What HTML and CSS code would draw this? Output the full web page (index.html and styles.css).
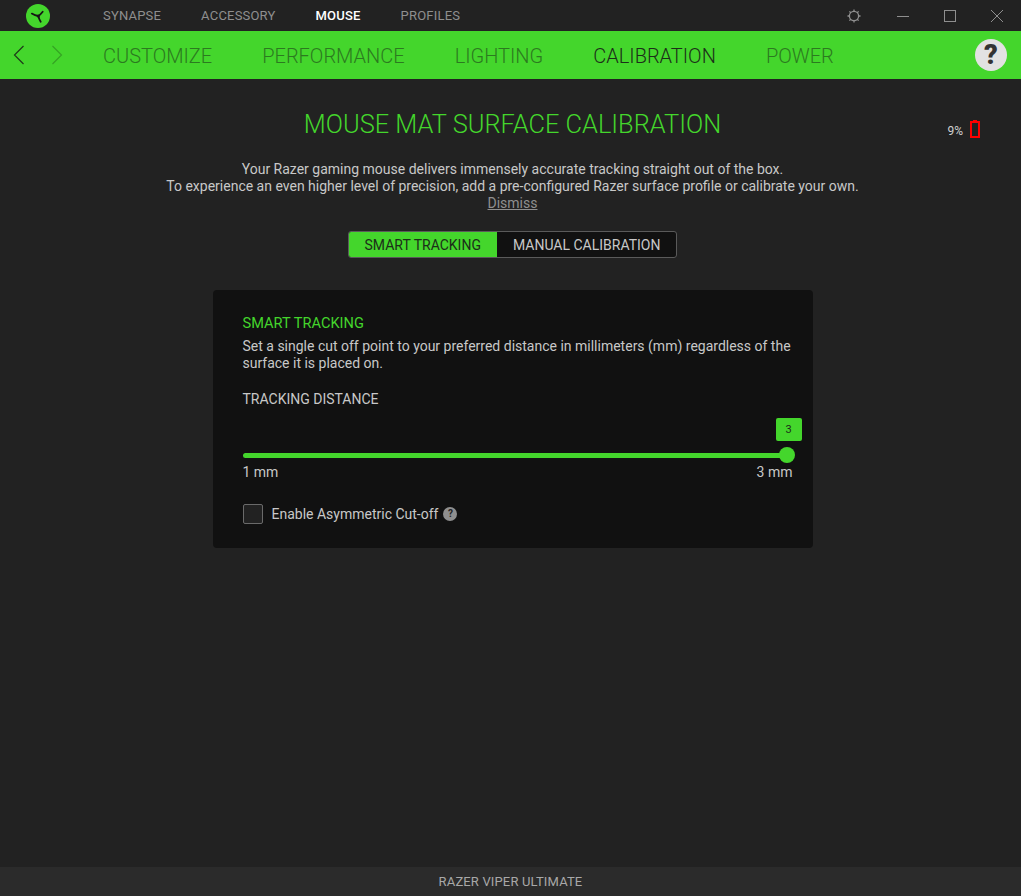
FILE: index.html
```html
<!DOCTYPE html>
<html lang="en">
<head>
<meta charset="utf-8">
<title>Razer Synapse</title>
<link rel="stylesheet" href="styles.css">
</head>
<body>
<div class="app">
  <header class="topbar">
    <div class="logo-cell">
      <svg class="logo" width="24" height="24" viewBox="0 0 24 24">
        <circle cx="12" cy="12" r="12" fill="#44d62c"/>
        <path d="M12.3 12 Q9 11.5 5.8 9.6 M12.3 12 Q14.5 10.5 16.7 7.7 M12.3 12 Q13 15 14.7 17.7" stroke="#161616" stroke-width="1.8" fill="none" stroke-linecap="round"/>
        <circle cx="12.3" cy="12" r="1.6" fill="#161616"/>
      </svg>
    </div>
    <nav class="topnav">
      <a class="topnav-item">SYNAPSE</a>
      <a class="topnav-item">ACCESSORY</a>
      <a class="topnav-item active">MOUSE</a>
      <a class="topnav-item">PROFILES</a>
    </nav>
    <div class="winctl">
      <svg class="winicon gear" width="16" height="16" viewBox="0 0 16 16" fill="none" stroke="#8f8f8f" stroke-width="1.3">
        <circle cx="8" cy="8" r="4.6"/>
        <path d="M8 1.5v2M8 12.5v2M1.5 8h2M12.5 8h2M3.4 3.4l1.4 1.4M11.2 11.2l1.4 1.4M3.4 12.6l1.4-1.4M11.2 4.8l1.4-1.4"/>
      </svg>
      <svg class="winicon" width="14" height="14" viewBox="0 0 14 14" fill="none" stroke="#8f8f8f" stroke-width="1"><path d="M1 7.5h12"/></svg>
      <svg class="winicon" width="14" height="14" viewBox="0 0 14 14" fill="none" stroke="#8f8f8f" stroke-width="1"><rect x="1.5" y="1.5" width="11" height="11"/></svg>
      <svg class="winicon" width="14" height="14" viewBox="0 0 14 14" fill="none" stroke="#8f8f8f" stroke-width="1"><path d="M1 1l12 12M13 1L1 13"/></svg>
    </div>
  </header>
  <div class="greenbar">
    <div class="arrows">
      <svg width="12" height="20" viewBox="0 0 12 20" fill="none" stroke="#1f3a1a" stroke-width="1.2"><path d="M10.5 1 L1.5 10 L10.5 19"/></svg>
      <svg width="12" height="20" viewBox="0 0 12 20" fill="none" stroke="#35a324" stroke-width="1.2"><path d="M1.5 1 L10.5 10 L1.5 19"/></svg>
    </div>
    <nav class="tabs">
      <a class="tab">CUSTOMIZE</a>
      <a class="tab">PERFORMANCE</a>
      <a class="tab">LIGHTING</a>
      <a class="tab current">CALIBRATION</a>
      <a class="tab">POWER</a>
    </nav>
    <div class="help">?</div>
  </div>
  <main class="content">
    <div class="battery">
      <span class="battery-text">9%</span>
      <svg width="10" height="18" viewBox="0 0 10 18" fill="none"><path d="M3 0h4v2H3z" fill="#ff0000"/><rect x="1" y="2" width="8" height="15" stroke="#ff0000" stroke-width="2"/></svg>
    </div>
    <h1 class="title">MOUSE MAT SURFACE CALIBRATION</h1>
    <p class="intro">Your Razer gaming mouse delivers immensely accurate tracking straight out of the box.<br>To experience an even higher level of precision, add a pre-configured Razer surface profile or calibrate your own.<br><a class="dismiss">Dismiss</a></p>
    <div class="segment">
      <span class="seg on">SMART TRACKING</span>
      <span class="seg">MANUAL CALIBRATION</span>
    </div>
    <section class="card">
      <h2 class="card-title">SMART TRACKING</h2>
      <p class="card-desc">Set a single cut off point to your preferred distance in millimeters (mm) regardless of the surface it is placed on.</p>
      <div class="label">TRACKING DISTANCE</div>
      <div class="slider">
        <div class="slider-value"><span class="bubble">3</span></div>
        <div class="track"><span class="thumb"></span></div>
        <div class="ends"><span>1 mm</span><span>3 mm</span></div>
      </div>
      <div class="check-row">
        <span class="checkbox"></span>
        <span class="check-label">Enable Asymmetric Cut-off</span>
        <span class="hint">?</span>
      </div>
    </section>
  </main>
  <footer class="footer">RAZER VIPER ULTIMATE</footer>
</div>
</body>
</html>
```
FILE: styles.css
```css
* { box-sizing: border-box; }
html, body { margin: 0; height: 100%; }
body { background: #222222; font-family: Roboto, "Liberation Sans", sans-serif; color: #c8c8c8; overflow: hidden; }
.app { height: 896px; display: flex; flex-direction: column; }

.topbar { height: 31px; background: #222222; display: flex; align-items: center; }
.logo-cell { width: 103px; padding-left: 26px; display: flex; align-items: center; }
.logo { display: block; }
.topnav { display: flex; gap: 40px; font-size: 13px; }
.topnav-item { color: #8f8f8f; letter-spacing: 0.2px; }
.topnav-item.active { color: #ffffff; font-weight: 500; }
.winctl { margin-left: auto; display: flex; align-items: center; gap: 33px; padding-right: 17px; }
.winicon { display: block; }
.winicon.gear { margin-right: 1px; }

.greenbar { height: 48px; background: #44d62c; display: flex; align-items: center; }
.arrows { width: 103px; padding-left: 13px; display: flex; gap: 26px; align-items: center; }
.arrows svg { display: block; }
.tabs { display: flex; gap: 50px; padding-top: 2px; font-size: 20px; font-weight: 300; color: #2c7a20; }
.tab.current { color: #1c2e19; }
.help { margin-left: auto; margin-right: 14px; width: 32px; height: 32px; border-radius: 50%; background: #e2e2e2; color: #333333; font-size: 27px; font-weight: 900; line-height: 32px; text-align: center; }

.content { flex: 1; position: relative; display: flex; flex-direction: column; align-items: center; padding-left: 4px; }
.battery { position: absolute; top: 41px; right: 41px; display: flex; align-items: flex-start; gap: 7px; }
.battery-text { margin-top: 4px; font-size: 12px; line-height: 14px; color: #d0d0d0; }
.battery svg { display: block; }
.title { margin: 28px 0 0; font-size: 25.4px; line-height: 34px; font-weight: 300; color: #44d62c; }
.intro { margin: 20px 0 0; font-size: 14px; line-height: 17px; text-align: center; color: #c8c8c8; }
.dismiss { color: #8f8f8f; text-decoration: underline; }

.segment { margin-top: 19px; height: 27px; display: flex; border: 1px solid #5a5a5a; border-radius: 3px; background: #111111; overflow: hidden; font-size: 14px; }
.seg { padding: 0 16px; display: flex; align-items: center; color: #c8c8c8; }
.seg.on { background: #44d62c; color: #1c2e19; }

.card { margin-top: 32px; width: 600px; height: 258px; background: #111111; border-radius: 4px; padding: 24px 20px 0 30px; }
.card-title { margin: 0; font-size: 14.6px; line-height: 18px; font-weight: 400; color: #44d62c; }
.card-desc { margin: 6px 0 0; font-size: 14px; line-height: 17px; color: #c8c8c8; }
.label { margin-top: 19px; font-size: 14px; line-height: 17px; color: #c8c8c8; }

.slider { margin-top: 10px; }
.slider-value { display: flex; justify-content: flex-end; margin-right: -9px; }
.bubble { width: 26px; height: 23px; background: #44d62c; border-radius: 2px; color: #1c2e19; font-size: 11px; display: flex; align-items: center; justify-content: center; }
.track { position: relative; margin-top: 12px; height: 5px; background: #44d62c; border-radius: 3px; margin-right: 6px; }
.thumb { position: absolute; right: -8px; top: -6px; width: 16px; height: 16px; border-radius: 50%; background: #44d62c; }
.ends { display: flex; justify-content: space-between; margin-top: 6px; font-size: 14px; line-height: 17px; color: #c8c8c8; }

.check-row { margin-top: 23px; display: flex; align-items: center; }
.checkbox { width: 20px; height: 20px; border: 1px solid #6a6a6a; border-radius: 2px; background: #222222; }
.check-label { margin-left: 9px; font-size: 14px; color: #c8c8c8; }
.hint { margin-left: 5px; width: 14px; height: 14px; border-radius: 50%; background: #8f8f8f; color: #222222; font-size: 10px; font-weight: 700; line-height: 14px; text-align: center; }

.footer { height: 29px; background: #2b2b2b; display: flex; align-items: center; justify-content: center; font-size: 13px; letter-spacing: 0.15px; color: #a8a8a8; }
```
